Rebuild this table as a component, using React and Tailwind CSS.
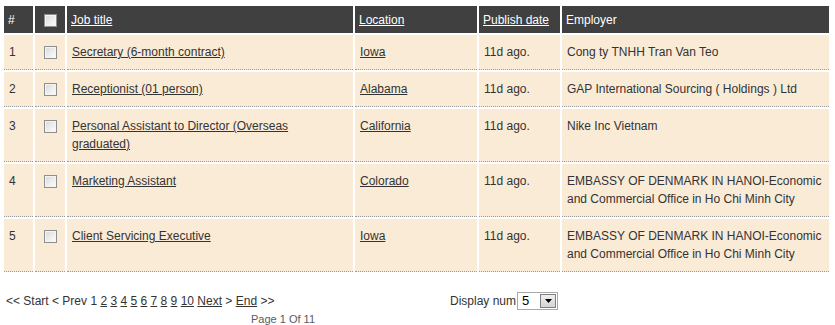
import React from "react";

function Check() {
  return (
    <span className="inline-block w-[13px] h-[13px] border border-[#8e8f8f] bg-gradient-to-br from-[#d8d8d8] via-[#ececec] to-white shadow-[inset_0_0_0_1px_#f4f4f4]" />
  );
}

const rows = [
  { n: 1, title: "Secretary (6-month contract)", loc: "Iowa", emp: "Cong ty TNHH Tran Van Teo" },
  { n: 2, title: "Receptionist (01 person)", loc: "Alabama", emp: "GAP International Sourcing ( Holdings ) Ltd" },
  { n: 3, title: "Personal Assistant to Director (Overseas graduated)", loc: "California", emp: "Nike Inc Vietnam" },
  { n: 4, title: "Marketing Assistant", loc: "Colorado", emp: "EMBASSY OF DENMARK IN HANOI-Economic and Commercial Office in Ho Chi Minh City" },
  { n: 5, title: "Client Servicing Executive", loc: "Iowa", emp: "EMBASSY OF DENMARK IN HANOI-Economic and Commercial Office in Ho Chi Minh City" },
];

export default function App() {
  const th = "bg-[#404040] text-white font-normal text-left align-top pt-[5px] pb-[4px] px-[4px]";
  const td = "bg-[#faebd7] align-top py-[8px] px-[5px] border-b border-dotted border-[#9a9a9a]";
  return (
    <div className="w-[835px] h-[325px] overflow-hidden bg-white font-['Liberation_Sans',Arial,sans-serif] text-[12px] leading-[18px] text-[#333]">
      <div className="pt-[4px] pl-[2px]">
        <table className="border-separate border-spacing-[2px] table-fixed w-[829px]">
          <colgroup>
            <col className="w-[29px]" />
            <col className="w-[30px]" />
            <col className="w-[286px]" />
            <col className="w-[122px]" />
            <col className="w-[81px]" />
            <col className="w-[267px]" />
          </colgroup>
          <thead>
            <tr>
              <th className={th}>#</th>
              <th className={th + " text-center"}>
                <div className="flex justify-center items-center h-[18px]"><Check /></div>
              </th>
              <th className={th}><a className="underline">Job title</a></th>
              <th className={th}><a className="underline">Location</a></th>
              <th className={th}><a className="underline">Publish date</a></th>
              <th className={th}>Employer</th>
            </tr>
          </thead>
          <tbody>
            {rows.map((r) => (
              <tr key={r.n}>
                <td className={td}>{r.n}</td>
                <td className={td}>
                  <div className="flex justify-center items-center h-[18px]"><Check /></div>
                </td>
                <td className={td}><a className="underline">{r.title}</a></td>
                <td className={td}><a className="underline">{r.loc}</a></td>
                <td className={td}>11d ago.</td>
                <td className={td}>{r.emp}</td>
              </tr>
            ))}
          </tbody>
        </table>
      </div>
      <div className="mt-[18px] flex">
        <div className="w-[450px] pl-[6px]">
          <div className="h-[18px] flex items-center whitespace-pre">
            <span>{"<< Start < Prev 1 "}</span>
            {[2, 3, 4, 5, 6, 7, 8, 9, 10].map((p) => (
              <span key={p}><a className="underline">{p}</a>{" "}</span>
            ))}
            <a className="underline">Next</a>
            <span>{" > "}</span>
            <a className="underline">End</a>
            <span>{" >>"}</span>
          </div>
          <div className="ml-[245px] mt-[2px] text-[11px] leading-[14px] text-[#5a5a64]">Page 1 Of 11</div>
        </div>
        <div className="flex items-center h-[18px]">
          <span>Display num</span>
          <div className="ml-[1px] w-[41px] h-[18px] border border-[#a9a9a9] bg-white flex items-center justify-between pl-[4px] pr-[1px]">
            <span className="text-[13px] leading-[14px] text-black">5</span>
            <div className="w-[16px] h-[14px] border border-[#7f7f7f] bg-gradient-to-b from-[#f0f0f0] to-[#d4d4d4] flex items-center justify-center">
              <svg width="7" height="4" viewBox="0 0 7 4"><path d="M0 0h7L3.5 4z" fill="#000" /></svg>
            </div>
          </div>
        </div>
      </div>
    </div>
  );
}
